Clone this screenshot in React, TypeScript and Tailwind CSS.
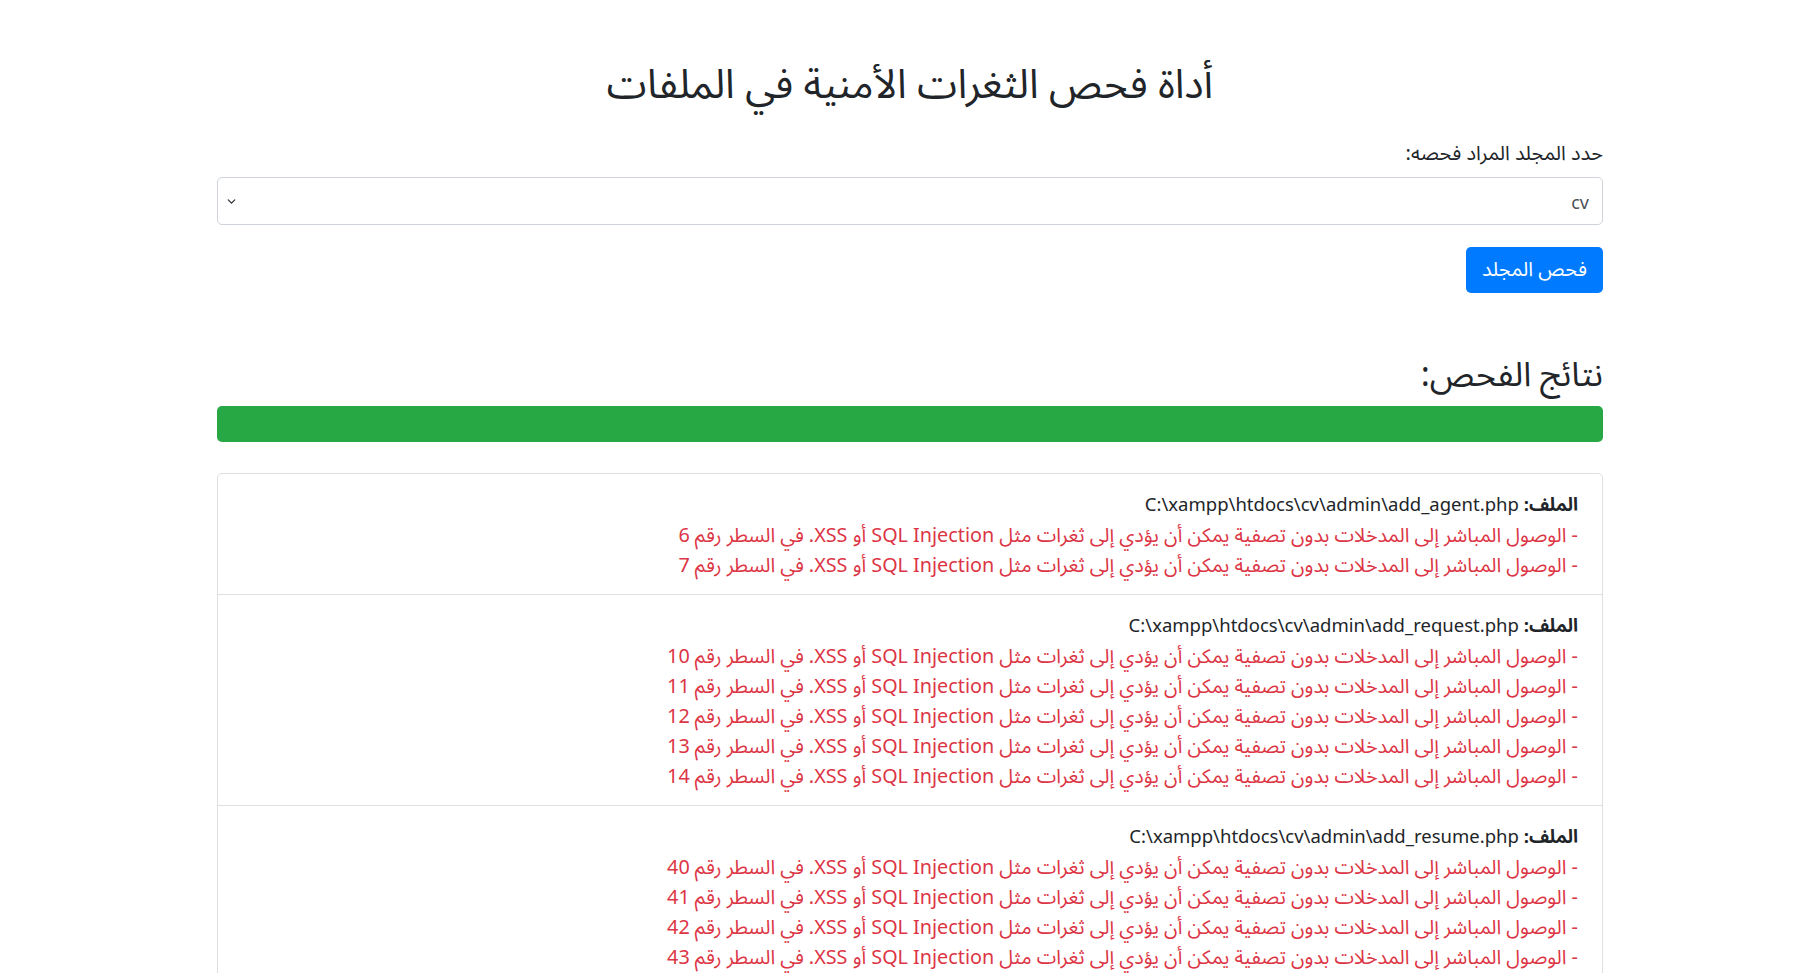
import { ChevronDown } from "lucide-react";

const results = [
  { file: "C:\\xampp\\htdocs\\cv\\admin\\add_agent.php", lines: [6, 7] },
  { file: "C:\\xampp\\htdocs\\cv\\admin\\add_request.php", lines: [10, 11, 12, 13, 14] },
  { file: "C:\\xampp\\htdocs\\cv\\admin\\add_resume.php", lines: [40, 41, 42, 43, 44] },
];

const msg = "- الوصول المباشر إلى المدخلات بدون تصفية يمكن أن يؤدي إلى ثغرات مثل SQL Injection أو XSS. في السطر رقم ";

export default function App() {
  return (
    <div
      dir="rtl"
      className="min-h-screen bg-white text-[#212529]"
      style={{ fontFamily: '"Noto Sans Arabic", "DejaVu Sans", sans-serif' }}
    >
      <div className="mx-auto w-[1386px] pt-[61px]">
        <h1 className="text-center text-[40.5px] leading-[48px] font-normal">أداة فحص الثغرات الأمنية في الملفات</h1>

        <div className="mt-[30px]">
          <label className="block text-[20px] leading-[30px] mb-2">حدد المجلد المراد فحصه:</label>
          <div className="relative">
            <select className="w-full h-[48px] appearance-none rounded-[5px] border border-[#ced4da] bg-white px-[13px] pt-[4px] text-[18px] text-[#495057] outline-none">
              <option>cv</option>
            </select>
            <ChevronDown className="pointer-events-none absolute left-[8px] top-[18px] h-[13px] w-[13px] text-[#343a40]" strokeWidth={2.5} />
          </div>
          <button className="mt-[22px] h-[46px] w-[137px] rounded-[5px] bg-[#007bff] text-[20px] text-white">فحص المجلد</button>
        </div>

        <h2 className="mt-[62px] text-[34px] leading-[40px] font-normal">نتائج الفحص:</h2>
        <div className="mt-[11px] h-[36px] w-full rounded-[5px] bg-[#28a745]" />

        <div className="mt-[31px] rounded-[5px] border border-[rgba(0,0,0,0.125)]">
          {results.map((r, i) => (
            <div key={r.file} className={"px-[24px] pt-[17px] pb-[13px] " + (i > 0 ? "border-t border-[rgba(0,0,0,0.125)]" : "")}>
              <div className="text-[18.5px] leading-[30px]">
                <strong className="font-bold">الملف:</strong> <span dir="ltr">{r.file}</span>
              </div>
              {r.lines.map((n) => (
                <div key={n} className="text-[19.8px] leading-[30px] text-[#dc3545]">
                  {msg}
                  {n}
                </div>
              ))}
            </div>
          ))}
        </div>
      </div>
    </div>
  );
}
